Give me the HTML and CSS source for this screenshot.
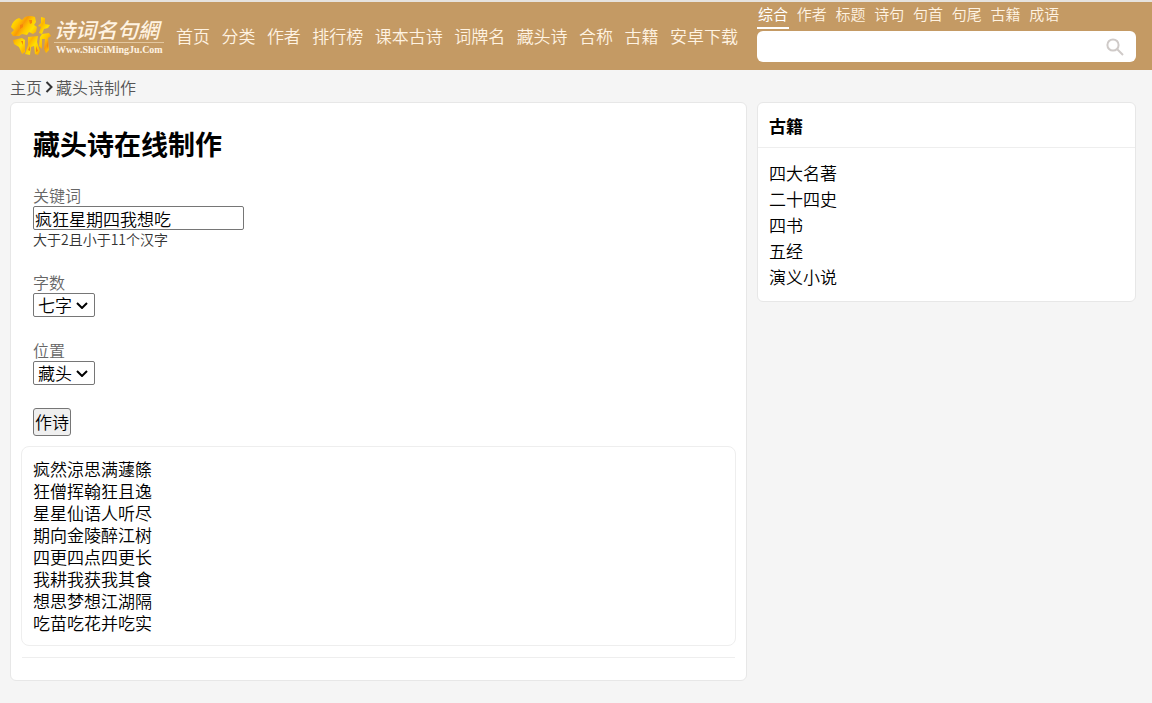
FILE: index.html
```html
<!DOCTYPE html>
<html lang="zh-CN">
<head>
<meta charset="utf-8">
<meta name="viewport" content="width=device-width, initial-scale=1">
<title>藏头诗在线制作</title>
<link rel="stylesheet" href="styles.css">
</head>
<body>
<header class="site-header">
  <div class="header-left">
    <a class="logo" href="#">
      <svg class="logo-mark" viewBox="0 0 42 42" aria-hidden="true">
        <defs>
          <linearGradient id="gold" x1="0" y1="0" x2="13" y2="9" gradientUnits="userSpaceOnUse" spreadMethod="reflect">
            <stop offset="0" stop-color="#ffb400"/>
            <stop offset=".35" stop-color="#ffe000"/>
            <stop offset=".7" stop-color="#ffc400"/>
            <stop offset="1" stop-color="#f99a08"/>
          </linearGradient>
        </defs>
        <g fill="url(#gold)">
          <path d="M1 12Q3 5 9 3L12 5 15 2Q20 0 25 2L26 7 24 10 27 12 26 17 23 19 19 17 17 20 12 19 9 21 3 21 1 18 4 15Z"/>
          <path d="M3 25L12 23 15 25 15 37 12 39 9 32 4 29Z"/>
          <path d="M18 22L28 21 27 27 30 36 28 40 25 39 24 31 21 32 20 40 15 39 18 30Z"/>
          <path d="M31 2L35 3 35 9 40 10 38 13 34 14 32 19 29 18 31 12 28 11 31 8Z"/>
          <path d="M32 19L39 18 41 21 38 23 39 35 36 38 34 34 35 24 32 24 32 34 29 31 30 22Z"/>
        </g>
        <path fill="#f7850a" d="M10 10L13 9 13 12 10 14ZM19 5L22 5 22 8 20 9ZM11 26L13 26 13 30ZM18 35L20 31 20 36ZM26 31L28 36 26 37ZM37 26L38 31 37 34Z"/>
      </svg>
      <span class="logo-text">
        <span class="logo-name">诗词名句網</span>
        <span class="logo-url">Www.ShiCiMingJu.Com</span>
      </span>
    </a>
    <nav class="main-nav">
      <a href="#">首页</a><a href="#">分类</a><a href="#">作者</a><a href="#">排行榜</a><a href="#">课本古诗</a><a href="#">词牌名</a><a href="#">藏头诗</a><a href="#">合称</a><a href="#">古籍</a><a href="#">安卓下载</a>
    </nav>
  </div>
  <form class="search">
    <div class="search-tabs">
      <a class="active" href="#">综合</a><a href="#">作者</a><a href="#">标题</a><a href="#">诗句</a><a href="#">句首</a><a href="#">句尾</a><a href="#">古籍</a><a href="#">成语</a>
    </div>
    <div class="search-box">
      <input class="search-input" type="text" aria-label="搜索">
      <button class="search-button" type="button" aria-label="搜索">
        <svg viewBox="0 0 18 18" aria-hidden="true"><circle cx="7" cy="7" r="5.6"/><path d="M11 11L17 17"/></svg>
      </button>
    </div>
  </form>
</header>

<nav class="breadcrumb">
  <a href="#">主页</a>
  <svg viewBox="0 0 8 12" aria-hidden="true"><path d="M1.500 1L6.500 6 1.500 11"/></svg>
  <a href="#">藏头诗制作</a>
</nav>

<div class="layout">
  <main class="card main-card">
    <h1 class="title">藏头诗在线制作</h1>
    <form class="maker">
      <div class="field">
        <label for="keyword">关键词</label>
        <input id="keyword" class="keyword" type="text" value="疯狂星期四我想吃">
        <small>大于2且小于11个汉字</small>
      </div>
      <div class="field">
        <label for="count">字数</label>
        <span class="select">
          <select id="count"><option>五字</option><option selected>七字</option></select>
          <svg viewBox="0 0 12 7" aria-hidden="true"><path d="M1 1L6 6 11 1"/></svg>
        </span>
      </div>
      <div class="field">
        <label for="position">位置</label>
        <span class="select">
          <select id="position"><option>藏头</option><option>藏尾</option></select>
          <svg viewBox="0 0 12 7" aria-hidden="true"><path d="M1 1L6 6 11 1"/></svg>
        </span>
      </div>
      <button class="submit" type="button">作诗</button>
    </form>
    <p class="poem">
      疯然涼思满蘧篨<br>
      狂僧挥翰狂且逸<br>
      星星仙语人听尽<br>
      期向金陵醉江树<br>
      四更四点四更长<br>
      我耕我获我其食<br>
      想思梦想江湖隔<br>
      吃苗吃花并吃实
    </p>
    <hr class="divider">
  </main>
  <aside class="card side-card">
    <h2 class="side-title">古籍</h2>
    <ul class="book-list">
      <li><a href="#">四大名著</a></li>
      <li><a href="#">二十四史</a></li>
      <li><a href="#">四书</a></li>
      <li><a href="#">五经</a></li>
      <li><a href="#">演义小说</a></li>
    </ul>
  </aside>
</div>
</body>
</html>
```

FILE: styles.css
```css
* { box-sizing: border-box; }

body {
  margin: 0;
  background: #f5f5f5;
  color: #000;
  font: 350 17px/22px "Noto Sans CJK SC", sans-serif;
}

a { color: inherit; text-decoration: none; }
input, select, button { font: inherit; color: inherit; }

.site-header,
.layout {
  display: grid;
  grid-template-columns: 737fr 379fr;
  column-gap: 10px;
  padding: 0 16px 0 10px;
}

.site-header {
  border-top: 2px solid #e6e3df;
  background: #c49a64;
  color: #fff3e2;
}

.header-left {
  display: flex;
  align-items: center;
  gap: 12px;
  height: 68px;
  padding-right: 9px;
}

.logo { display: flex; align-items: center; gap: 2px; }
.logo-mark { width: 42px; height: 42px; }
.logo-text { display: flex; flex-direction: column; width: 110px; }

.logo-name {
  border-bottom: 1px solid #e3c79f;
  font-size: 21px;
  font-weight: 500;
  font-style: italic;
  line-height: 26px;
  white-space: nowrap;
}

.logo-url {
  padding-left: 2px;
  font: bold 10px/14px "Liberation Serif", serif;
}

.main-nav {
  display: flex;
  flex: 1;
  justify-content: space-between;
  white-space: nowrap;
}

.search-tabs {
  display: flex;
  justify-content: space-between;
  width: 80%;
  font-size: 15px;
  line-height: 23px;
  white-space: nowrap;
}

.search-tabs a { padding: 0 1px 2px; border-bottom: 2px solid transparent; }
.search-tabs .active { border-color: #fff; color: #fff; font-weight: 400; }

.search-box {
  display: flex;
  align-items: center;
  height: 31px;
  margin-top: 2px;
  padding-right: 12px;
  border-radius: 6px;
  background: #fff;
}

.search-input {
  flex: 1;
  min-width: 0;
  border: 0;
  padding: 0 8px;
  background: transparent;
  color: #333;
  outline: 0;
}

.search-button { display: flex; padding: 0; border: 0; background: none; }
.search-button svg { width: 18px; height: 18px; fill: none; stroke: #cfcac8; stroke-width: 2; }

.breadcrumb {
  display: flex;
  align-items: center;
  gap: 3px;
  height: 32px;
  padding: 2px 10px 0;
  color: #555;
  font-size: 16px;
}

.breadcrumb svg { width: 8px; height: 12px; fill: none; stroke: #333; stroke-width: 2; }

.layout { align-items: start; padding-bottom: 22px; }

.card {
  border: 1px solid #e7e7e7;
  border-radius: 6px;
  background: #fff;
}

.main-card { padding: 0 10px 22px; }

.title {
  margin: 21px 12px;
  font-size: 27px;
  font-weight: 700;
  line-height: 40px;
}

.maker { padding: 0 12px; margin-bottom: 10px; }

.field {
  display: flex;
  flex-direction: column;
  align-items: flex-start;
  margin-bottom: 23px;
}

.field label { color: #666; font-size: 16px; line-height: 21px; }
.field small { color: #333; font-size: 14px; line-height: 19px; }

.keyword {
  width: 211px;
  height: 24px;
  border: 1px solid #767676;
  border-radius: 2px;
  padding: 0 1px;
}

.select {
  display: grid;
  align-items: center;
  justify-items: end;
}

.select > * { grid-area: 1 / 1; }

.select select {
  appearance: none;
  height: 24px;
  border: 1px solid #767676;
  border-radius: 2px;
  padding: 0 22px 0 4px;
  background: #fff;
  line-height: 22px;
}

.select svg {
  width: 12px;
  height: 7px;
  margin-right: 7px;
  fill: none;
  stroke: #000;
  stroke-width: 2;
  pointer-events: none;
}

.submit {
  display: block;
  height: 28px;
  border: 1px solid #767676;
  border-radius: 3px;
  padding: 0 1px;
  background: #efefef;
}

.poem {
  margin: 0;
  border: 1px solid #eee;
  border-radius: 8px;
  padding: 11px;
}

.divider { margin: 11px 1px 0; border: 0; border-top: 1px solid #eee; }

.side-title {
  margin: 0;
  border-bottom: 1px solid #eee;
  padding: 12px 11px 10px;
  font-size: 17px;
  font-weight: 700;
}

.book-list {
  display: grid;
  row-gap: 4px;
  margin: 0;
  padding: 14px 11px 13px;
  list-style: none;
}
```
